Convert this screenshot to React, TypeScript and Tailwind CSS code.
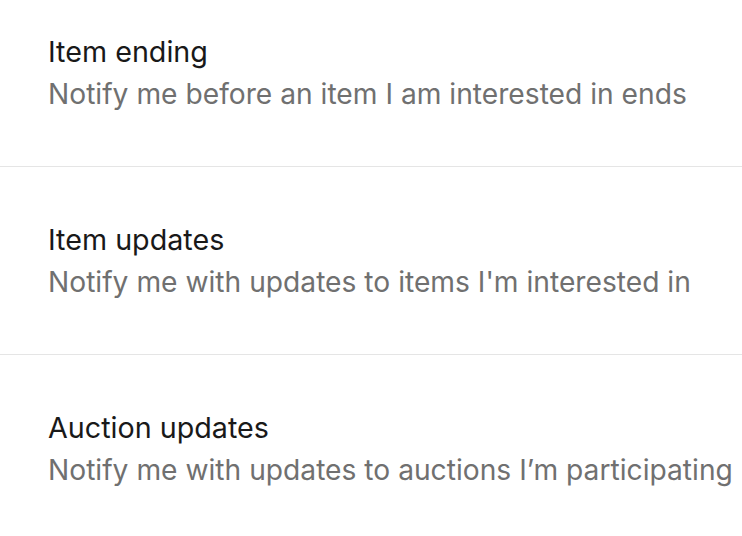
const items = [
  { title: "Item ending", text: "Notify me before an item I am interested in ends" },
  { title: "Item updates", text: "Notify me with updates to items I'm interested in" },
  { title: "Auction updates", text: "Notify me with updates to auctions I’m participating" },
];

export default function App() {
  return (
    <div className="h-[536px] w-[742px] overflow-hidden bg-white font-['Inter',sans-serif]">
      {items.map((item, i) => (
        <div
          key={i}
          className="border-b border-[#e5e5e5] pl-12 pt-[52px] pb-[51px] first:pt-[31px] whitespace-nowrap"
        >
          <div className="text-[28.7px] leading-[42px] text-[#191919]">{item.title}</div>
          <div className="text-[28.2px] leading-[42px] text-[#707070]">{item.text}</div>
        </div>
      ))}
    </div>
  );
}
